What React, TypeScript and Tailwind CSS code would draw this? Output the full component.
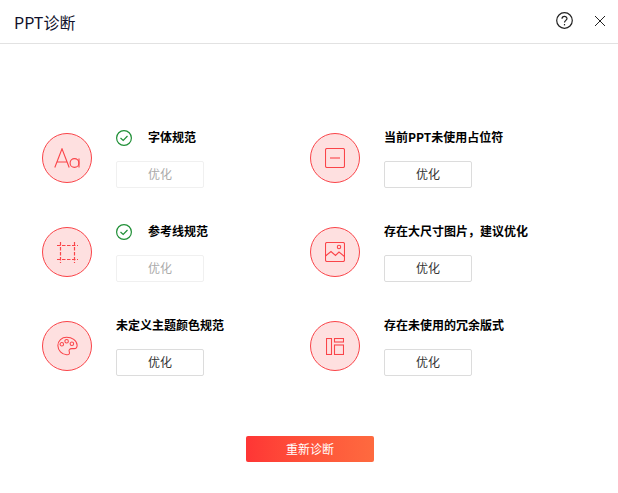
import type { ReactNode } from 'react'

const RED = '#fa4449'

function FontIcon() {
  return (
    <svg width="26" height="20" viewBox="0 0 26 20" fill="none" stroke={RED} strokeWidth="1.1">
      <path d="M0.8 19.5 L8 0.8 L15.2 19.5 M3 14 H13" />
      <circle cx="20.5" cy="15" r="4.4" />
      <path d="M25 10.5 V19.5" />
    </svg>
  )
}

function GuideIcon() {
  return (
    <svg width="21" height="21" viewBox="0 0 21 21" fill="none" stroke={RED} strokeWidth="1.2" strokeDasharray="3.5 1.5">
      <path d="M0 3.5 H21 M0 17.5 H21 M3.5 0 V21 M17.5 0 V21" />
    </svg>
  )
}

function PaletteIcon() {
  return (
    <svg width="21" height="22" viewBox="0 0 24 24" fill="none" stroke={RED} strokeWidth="1.2">
      <path d="M11 2 C5.5 2 1 6 1 11.5 C1 17 5.5 21.5 11 22 C14 22.3 14.8 20.5 14 18.6 C13.2 16.6 14.5 15 16.8 15 H19.5 C22 15 23 13.5 23 11 C22.6 5.5 17 2 11 2 Z" />
      <circle cx="5.5" cy="10" r="2" />
      <circle cx="11" cy="6.5" r="2" />
      <circle cx="17" cy="9.5" r="2" />
    </svg>
  )
}

function PlaceholderIcon() {
  return (
    <svg width="20" height="20" viewBox="0 0 20 20" fill="none" stroke={RED} strokeWidth="1.1">
      <rect x="0.5" y="0.5" width="19" height="19" rx="1.5" />
      <path d="M5 10 H15" />
    </svg>
  )
}

function ImageIcon() {
  return (
    <svg width="20" height="20" viewBox="0 0 20 20" fill="none" stroke={RED} strokeWidth="1.1">
      <rect x="0.5" y="0.5" width="19" height="19" rx="1.5" />
      <circle cx="14" cy="5" r="1.7" />
      <path d="M0.5 14 L6 9.5 L10.5 13.5 L14 10 L19.5 14.5" />
    </svg>
  )
}

function LayoutIcon() {
  return (
    <svg width="18" height="17" viewBox="0 0 18 17" fill="none" stroke={RED} strokeWidth="1.1">
      <rect x="0.5" y="0.5" width="5" height="16" />
      <rect x="8.5" y="0.5" width="9" height="3.5" />
      <rect x="8.5" y="7" width="9" height="9.5" />
    </svg>
  )
}

function CheckIcon() {
  return (
    <svg width="16" height="16" viewBox="0 0 16 16" fill="none" stroke="#1f8f36" strokeWidth="1.2">
      <circle cx="8" cy="8" r="7.4" />
      <path d="M4.5 8 L7.2 10.5 L11.5 6" />
    </svg>
  )
}

interface CheckItem {
  icon: ReactNode
  title: string
  passed?: boolean
}

const items: CheckItem[] = [
  { icon: <FontIcon />, title: '字体规范', passed: true },
  { icon: <PlaceholderIcon />, title: '当前PPT未使用占位符' },
  { icon: <GuideIcon />, title: '参考线规范', passed: true },
  { icon: <ImageIcon />, title: '存在大尺寸图片，建议优化' },
  { icon: <PaletteIcon />, title: '未定义主题颜色规范' },
  { icon: <LayoutIcon />, title: '存在未使用的冗余版式' },
]

function Row({ item }: { item: CheckItem }) {
  return (
    <div className="flex h-[94px] gap-6">
      <div className="mt-[5px] flex h-[50px] w-[50px] items-center justify-center rounded-full border border-[#fa4449] bg-[#fee0e0]">
        {item.icon}
      </div>
      <div className="flex flex-col">
        <div className="flex h-5 items-center text-xs leading-4 font-bold text-black">
          {item.passed && (
            <span className="mr-4 flex">
              <CheckIcon />
            </span>
          )}
          <span className="pb-[2px]">{item.title}</span>
        </div>
        <button
          className={
            item.passed
              ? 'mt-[13px] h-[27px] w-[88px] rounded-[2px] border border-[#f0f0f0] bg-white pb-px text-xs text-[#aaaaaa]'
              : 'mt-[13px] h-[27px] w-[88px] rounded-[2px] border border-[#dcdcdc] bg-white pb-px text-xs text-[#333333]'
          }
        >
          优化
        </button>
      </div>
    </div>
  )
}

export default function App() {
  return (
    <div className="flex h-[493px] w-[618px] flex-col bg-white font-['Noto_Sans_CJK_SC','Liberation_Sans',sans-serif]">
      <header className="flex h-[44px] items-center justify-between border-b border-[#e2e2e2] pl-[14px] pr-3">
        <span className="text-base text-[#10102a]">PPT诊断</span>
        <div className="mb-[2px] flex items-center gap-[21px]">
          <svg width="17" height="17" viewBox="0 0 17 17" fill="none" stroke="#222222" strokeWidth="1.2">
            <circle cx="8.5" cy="8.5" r="7.8" />
            <path d="M6 6.8 C6 3.6 11 3.6 11 6.6 C11 8.4 8.5 8.4 8.5 10.6" />
            <path d="M8.5 12 V13.4" />
          </svg>
          <svg width="12" height="12" viewBox="0 0 12 12" fill="none" stroke="#222222" strokeWidth="1">
            <path d="M1 1 L11 11 M11 1 L1 11" />
          </svg>
        </div>
      </header>
      <div className="mt-[84px] grid grid-cols-[268px_1fr] pl-[42px]">
        {items.map((item) => (
          <Row key={item.title} item={item} />
        ))}
      </div>
      <div className="mt-[26px] flex justify-center pl-[2px]">
        <button className="h-[26px] w-[128px] rounded-[2px] bg-gradient-to-r from-[#fe3535] to-[#fe6a3f] pb-px text-xs text-white">
          重新诊断
        </button>
      </div>
    </div>
  )
}
